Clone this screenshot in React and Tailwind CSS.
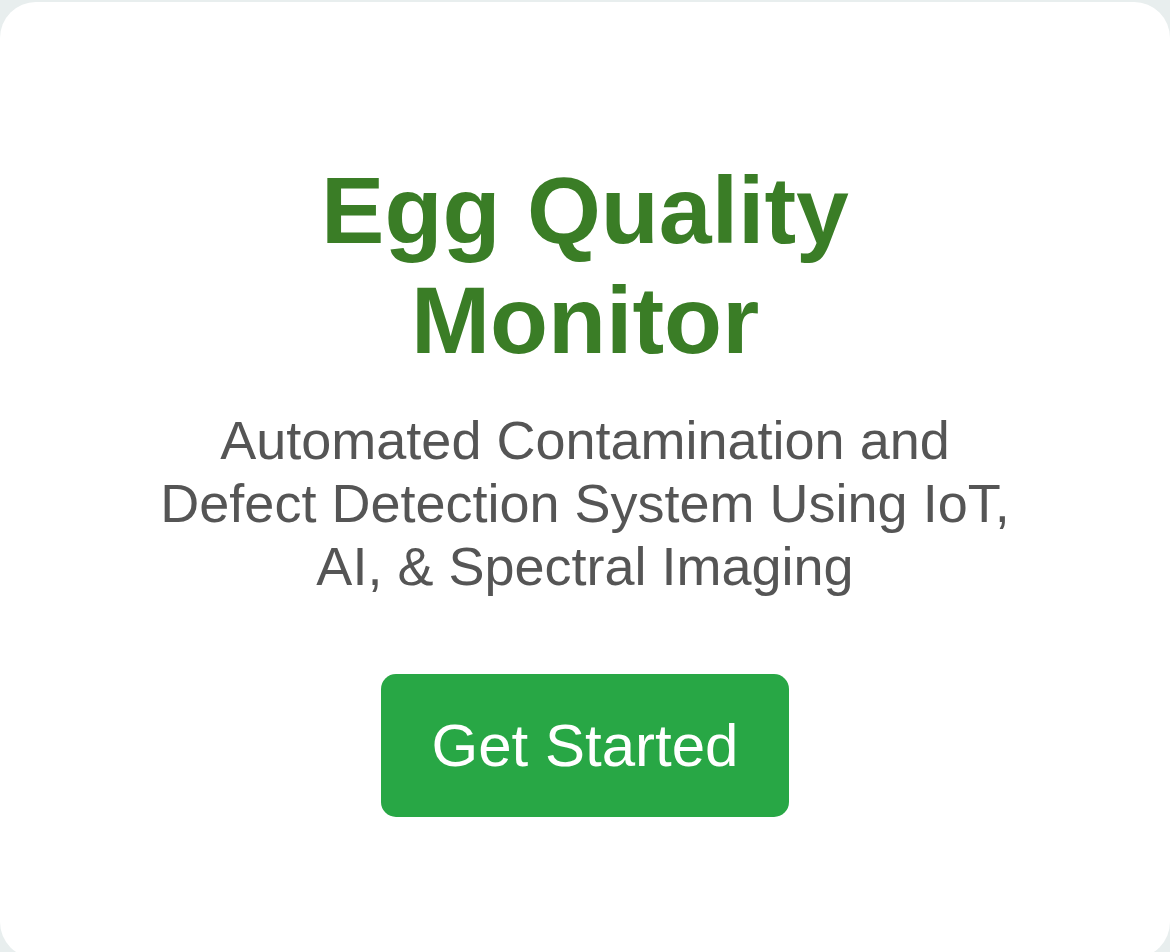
import React from 'react';

const App = () => {
  return (
    <div className="h-[952px] w-full overflow-hidden bg-[#e8eeee] pt-[2px] font-['Liberation_Sans',Arial,sans-serif]">
      <div className="flex h-[956px] flex-col items-center rounded-[36px] bg-white px-[150px] pt-[153px] text-center">
        {/* Heading */}
        <h1 className="text-[95px] font-bold leading-[1.16] text-[#3a7d26]">Egg Quality Monitor</h1>
        <p className="mt-[34px] text-[54px] leading-[63px] text-[#555555]">
          Automated Contamination and Defect Detection System Using IoT, AI, &amp; Spectral Imaging
        </p>

        <button className="mt-[76px] flex h-[143px] w-[408px] items-center justify-center rounded-[15px] bg-[#28a745] text-[60px] leading-[1.15] text-white">
          Get Started
        </button>
      </div>
    </div>
  );
};

export default App;
